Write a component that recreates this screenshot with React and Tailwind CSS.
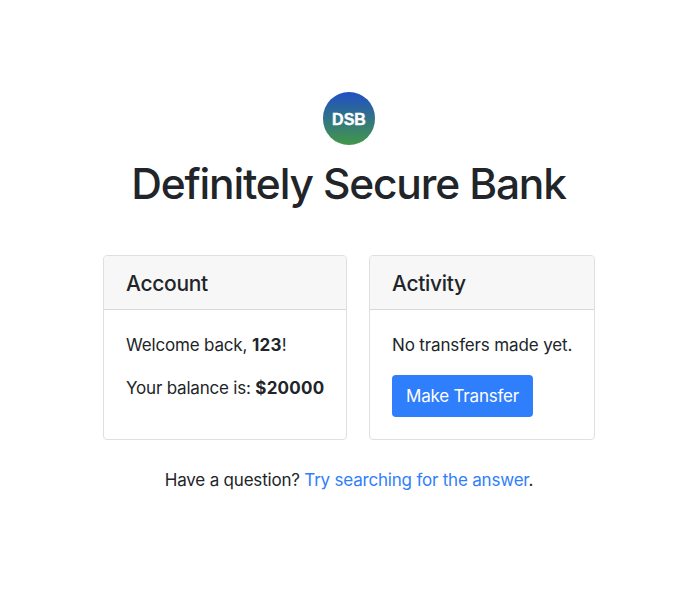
function Card({ title, className, children }) {
  return (
    <section className={"flex h-[185px] flex-col overflow-hidden rounded border border-[#dfdfdf] bg-white " + className}>
      <header className="flex h-[54px] shrink-0 items-center border-b border-[#d9d9d9] bg-[#f7f7f7] px-[22px]">
        <h2 className="pt-[3px] text-[21px] font-medium leading-[26px] tracking-[-0.3px]">{title}</h2>
      </header>
      <div className="px-[22px] pt-[22px]">{children}</div>
    </section>
  );
}

export default function App() {
  return (
    <main className="flex h-[600px] w-[700px] flex-col items-center bg-white pr-[2px] pt-[92px] font-['Inter',sans-serif] text-[17px] leading-[26px] tracking-[-0.2px] text-[#212529]">
      <div className="flex h-[53px] w-[52px] shrink-0 items-center justify-center rounded-full bg-linear-to-b/srgb from-[#204fc4] to-[#439848]">
        <span className="pt-[2px] font-['Liberation_Sans',sans-serif] text-[16px] font-bold tracking-normal text-white [-webkit-text-stroke:0.4px_white]">DSB</span>
      </div>
      <h1 className="mt-[12px] whitespace-nowrap pr-px text-[42.5px] font-medium leading-[53px] tracking-[-1.17px]">Definitely Secure Bank</h1>
      <div className="mt-[45px] flex gap-[22px]">
        <Card title="Account" className="w-[244px]">
          <p className="whitespace-nowrap tracking-[-0.17px]">Welcome back, <strong className="font-bold tracking-[0.3px]">123</strong>!</p>
          <p className="mt-[17px] whitespace-nowrap">Your balance is: <strong className="font-bold tracking-[0.25px]">$20000</strong></p>
        </Card>
        <Card title="Activity" className="w-[226px]">
          <p className="whitespace-nowrap tracking-[-0.14px]">No transfers made yet.</p>
          <button className="mt-[17px] h-[42px] w-[141px] whitespace-nowrap rounded bg-[#2f7efb] text-white">Make Transfer</button>
        </Card>
      </div>
      <p className="mt-[27px] whitespace-nowrap">
        Have a question? <a className="text-[#2f7efb]">Try searching for the answer</a>.
      </p>
    </main>
  );
}
